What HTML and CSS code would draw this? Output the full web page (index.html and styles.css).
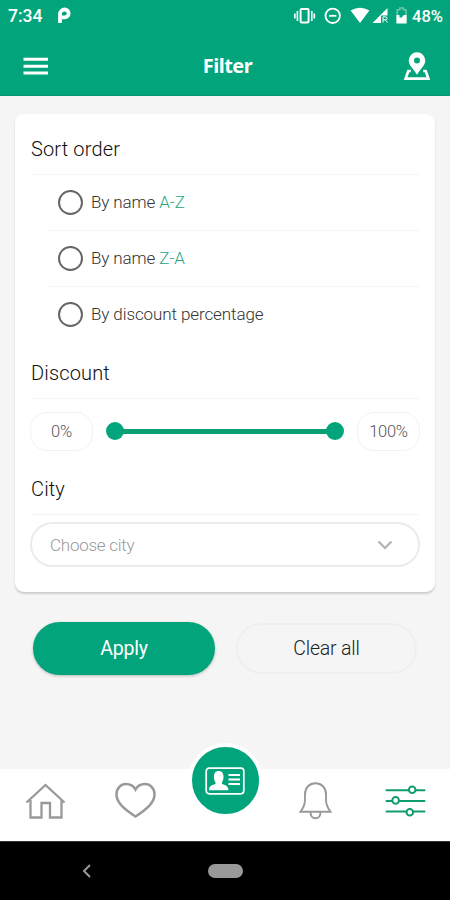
FILE: index.html
```html
<!DOCTYPE html>
<html lang="en">
<head>
<meta charset="utf-8">
<title>Filter</title>
<link rel="stylesheet" href="styles.css">
</head>
<body>
<div class="screen">
  <div class="status">
    <span class="time">7:34</span>
    <svg class="p-logo" width="15" height="18" viewBox="0 0 15 18"><path d="M3 16V7.200a4.700 4.700 0 0 1 4.700-4.700 3.800 3.800 0 0 1 0 7.900H5" fill="none" stroke="#fff" stroke-width="3.800"/></svg>
    <svg class="status-icons" width="115" height="20" viewBox="290 6 115 20" fill="none" stroke="#fff">
      <rect x="298.600" y="9" width="8" height="13.600" rx="1" stroke-width="2"/>
      <path d="M295.400 11v10M292.900 13.500v5M309.800 11v10M312.300 13.500v5" stroke-width="1.600"/>
      <circle cx="330.700" cy="15.800" r="7.200" stroke-width="1.800"/><path d="M327 15.800h7.400" stroke-width="1.800"/>
      <path d="M348.600 10.500Q358 4.800 367.400 10.500L358 23z" fill="#fff" stroke="none"/>
      <path d="M370.500 23L385.500 8v7.500h-6.500V23z" fill="#fff" stroke="none"/>
      <path d="M381 22.500v-5.700h2.500a1.400 1.400 0 0 1 0 3H381M383.200 19.800l2.300 2.700" stroke-width="1"/>
      <path d="M395.200 15v-5.300h2.600V8h3.600v1.700h2.600V15" stroke="#6cc7ab" stroke-width="1.500"/>
      <path d="M394.400 15h3.100v2.600h2.200l2-2.600h3v8.500h-10.300z" fill="#fff" stroke="none"/>
    </svg>
    <span class="battery">48%</span>
  </div>
  <header class="header">
    <svg width="26" height="20" viewBox="0 0 26 20"><path d="M.5 3.200H25M.5 10.200H25M.5 17H25" stroke="#fff" stroke-width="3"/></svg>
    <h1 class="title">Filter</h1>
    <svg class="map-pin" width="28" height="30" viewBox="0 0 28 30"><path fill="#fff" fill-rule="evenodd" d="M14 1.200a8.300 8.300 0 0 1 8.300 8.300c0 5-5 8.500-8.300 14.300-3.300-5.800-8.300-9.300-8.300-14.300A8.300 8.300 0 0 1 14 1.200zm0 5.300a3 3 0 1 0 0 6 3 3 0 0 0 0-6z"/><path d="M7.800 20H5.300L2.600 27.600h22.800L22.700 20h-2.500" fill="none" stroke="#fff" stroke-width="2.600"/></svg>
  </header>
  <main class="content">
    <section class="card">
      <h2 class="heading first">Sort order</h2>
      <div class="options">
        <label class="option"><i class="radio"></i><span>By name <b>A-Z</b></span></label>
        <label class="option"><i class="radio"></i><span>By name <b>Z-A</b></span></label>
        <label class="option last"><i class="radio"></i><span>By discount percentage</span></label>
      </div>
      <h2 class="heading discount">Discount</h2>
      <div class="range">
        <span class="pill">0%</span>
        <div class="slider"><i class="knob"></i><i class="track"></i><i class="knob"></i></div>
        <span class="pill">100%</span>
      </div>
      <h2 class="heading city">City</h2>
      <div class="select">
        <span>Choose city</span>
        <svg width="16" height="10" viewBox="0 0 16 10"><path d="M1.500 1.500L8 8l6.500-6.500" fill="none" stroke="#b2b2b2" stroke-width="2.200"/></svg>
      </div>
    </section>
    <div class="actions">
      <button class="btn apply">Apply</button>
      <button class="btn clear">Clear all</button>
    </div>
  </main>
  <nav class="tabs">
    <svg width="90" height="72" viewBox="0 769 90 72" fill="none" stroke="#999" stroke-width="2.300"><path d="M26.500 802.500L45.500 785l19 17.500M30.500 800v17.500h11V803h8.500v14.500h11.500V800"/></svg>
    <svg width="90" height="72" viewBox="90 769 90 72" fill="none" stroke="#999" stroke-width="2.500"><path d="M135.500 816.500C125 809.500 116.500 803 116.500 794.500c0-6.500 4.500-10.500 9.500-10.500 4.500 0 7.800 2.300 9.500 5.500 1.700-3.200 5-5.500 9.500-5.500 5 0 9.500 4 9.500 10.500 0 8.500-8.500 15-19 22z"/></svg>
    <div class="card-tab">
      <div class="card-button">
        <svg width="40" height="28" viewBox="0 0 40 28" fill="none" stroke="#fff"><rect x="1.200" y="1.200" width="37.600" height="25.600" rx="3" stroke-width="1.700"/><path d="M23.500 8h11.500M23.500 12.500h11.500M23.500 17h11.500" stroke-width="1.900"/><path d="M4 23.200c0-4 2-4.600 6.500-6.200v-1.800c-1-1.200-1.600-3-1.600-5.200 0-4 1.800-6 4.800-6s4.800 2 4.800 6c0 2.200-.6 4-1.600 5.200V17c4.500 1.600 6.500 2.200 6.500 6.200z" fill="#fff" stroke="none"/></svg>
      </div>
    </div>
    <svg width="90" height="72" viewBox="270 769 90 72" fill="none" stroke="#999" stroke-width="1.900"><path d="M300.500 811.800c3-4 4.500-7.500 4.500-12v-5.600c0-6.600 4.600-11 10.500-11s10.500 4.400 10.500 11v5.600c0 4.500 1.500 8 4.500 12zM310.500 812c0 4 2 6.200 5 6.200s5-2.200 5-6.200"/></svg>
    <svg width="90" height="72" viewBox="360 769 90 72" fill="#fff" stroke="#119c70" stroke-width="2" stroke-linecap="round"><path d="M386.500 790.300h38M386.500 801h38M386.500 811.600h38"/><circle cx="412.200" cy="789.700" r="3.300"/><circle cx="395.600" cy="800.400" r="3.300"/><circle cx="409.800" cy="812.300" r="3.300"/></svg>
  </nav>
  <div class="system">
    <svg width="10" height="16" viewBox="0 0 10 16"><path d="M8 2L2 8l6 6" fill="none" stroke="#999" stroke-width="2"/></svg>
    <i class="home-pill"></i>
  </div>
</div>
</body>
</html>
```
FILE: styles.css
```css
* { box-sizing: border-box; }
body { margin: 0; font-family: Roboto, "Liberation Sans", sans-serif; color: #333; }
h1, h2 { margin: 0; }
svg { display: block; flex: none; }
.screen { width: 450px; height: 900px; display: flex; flex-direction: column; background: #f5f5f5; overflow: hidden; }
.status { height: 32px; flex: none; display: flex; align-items: center; padding: 0 7px 0 8px; background: #02a57b; color: #fff; font-size: 17.5px; font-weight: 500; }
.p-logo { margin-left: 15px; }
.status-icons { margin-left: auto; margin-right: 5px; transform: translateX(-2px); }
.battery { font-size: 16.5px; margin-left: -2px; }
.header { height: 64px; flex: none; display: flex; align-items: center; justify-content: space-between; padding: 4px 19px 0 23px; background: #02a57b; border-bottom: 1px solid #04956f; color: #fff; }
.title { font: 700 20px "Noto Sans", sans-serif; margin-left: 3px; letter-spacing: -.5px; }
.content { flex: 1; padding: 18px 15px 0; }
.card { height: 478px; padding: 0 15px; background: #fff; border-radius: 9px; box-shadow: 0 2px 2px rgba(0,0,0,.17); }
.heading { display: flex; align-items: center; padding-left: 1px; border-bottom: 1px solid #f5f5f5; font-size: 20px; font-weight: 300; color: #111; letter-spacing: .15px; }
.first { height: 61px; padding-top: 9px; }
.options { padding-left: 17px; }
.option { height: 56px; display: flex; align-items: center; gap: 8px; padding-left: 11px; border-bottom: 1px solid #f5f5f5; font-size: 17px; font-weight: 300; letter-spacing: -.1px; }
.option span { padding-bottom: 1px; }
.option b { color: #24a77f; font-weight: 300; }
.radio { width: 25px; height: 25px; border: 2px solid #666; border-radius: 50%; }
.last { border: 0; padding-bottom: 1px; }
.discount { height: 56px; padding-top: 4px; }
.range { height: 64px; display: flex; align-items: center; justify-content: space-between; }
.pill { width: 63px; height: 39px; display: flex; align-items: center; justify-content: center; border: 1px solid #f2f2f2; border-radius: 17px; font-size: 16.5px; font-weight: 300; color: #555; letter-spacing: -.3px; }
.slider { width: 238px; display: flex; align-items: center; }
.knob { width: 18px; height: 18px; border-radius: 50%; background: #02a57b; flex: none; }
.track { flex: 1; height: 5px; margin: 0 -2px; background: #0ba073; }
.city { height: 52px; padding-top: 0; }
.select { height: 45px; margin-top: 7px; display: flex; align-items: center; justify-content: space-between; padding: 0 25px 0 18px; border: 2px solid #ebebeb; border-radius: 23px; font-size: 17px; font-weight: 300; color: #999; letter-spacing: -.25px; }
.actions { display: flex; align-items: center; gap: 21px; padding: 30px 18px 0; }
.btn { font-family: inherit; font-size: 19.5px; border: 0; padding: 0; letter-spacing: -.2px; }
.apply { width: 182px; height: 53px; border-radius: 27px; background: #02a57b; color: #fff; font-weight: 400; box-shadow: 0 1px 3px rgba(0,0,0,.25); }
.clear { width: 181px; height: 51px; border-radius: 26px; border: 2px solid #efefef; background: transparent; color: #222; font-weight: 300; }
.tabs { height: 72px; flex: none; display: flex; background: #fff; }
.card-tab { width: 90px; display: flex; justify-content: center; }
.card-button { width: 75px; height: 75px; flex: none; margin-top: -26px; display: flex; align-items: center; justify-content: center; border: 4px solid #fff; border-radius: 50%; background: #02a57b; }
.system { height: 59px; flex: none; display: flex; align-items: center; background: #000; border-top: 1px solid #333; padding-left: 82px; gap: 116px; }
.home-pill { width: 35px; height: 14px; border-radius: 7px; background: #999; }
```
